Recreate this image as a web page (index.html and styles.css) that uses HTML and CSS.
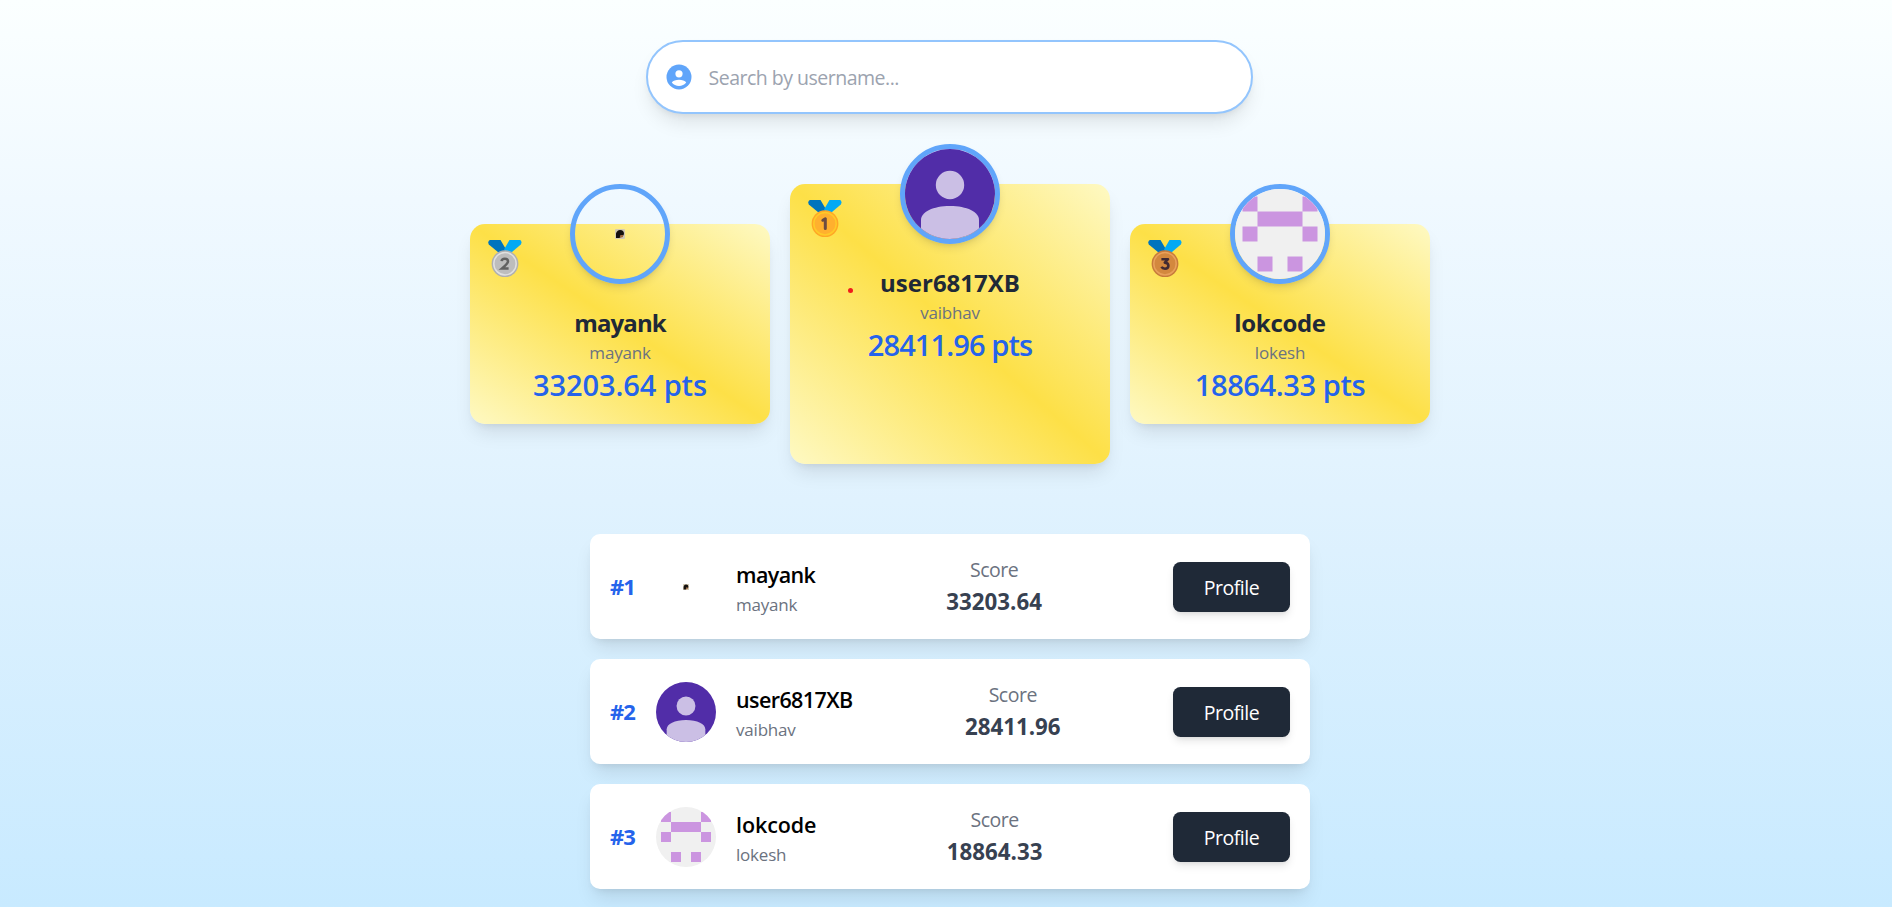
FILE: index.html
```
<!DOCTYPE html>
<html lang="en">
<head>
<meta charset="utf-8">
<title>Leaderboard</title>
<link rel="stylesheet" href="styles.css">
</head>
<body>
<svg class="defs" width="0" height="0">
  <defs>
    <symbol id="person" viewBox="0 0 90 90">
      <rect width="90" height="90" fill="#512da8"/>
      <circle cx="45" cy="36" r="14.2" fill="#cbbfe5"/>
      <path d="M16 90V71C16 63 28 57 45 57S74 63 74 71V90Z" fill="#cbbfe5"/>
    </symbol>
    <symbol id="pixels" viewBox="0 0 60 60">
      <rect width="60" height="60" fill="#f0f0f0"/>
      <path fill="#cb95e0" d="M5 5h10v10H5zM45 5h10v10H45zM15 15h30v10H15zM5 25h10v10H5zM45 25h10v10H45zM15 45h10v10H15zM35 45h10v10H35z"/>
    </symbol>
    <symbol id="tiny" viewBox="0 0 10 10">
      <rect width="10" height="10" rx="1" fill="#d3cab4"/>
      <path d="M1 9V4.5Q2 1 5 1Q9 1 9 5L8 7L6 6L5 9Z" fill="#15100f"/>
      <path d="M4.5 9L5.5 6L8 6V8Z" fill="#a0683f"/>
    </symbol>
    <symbol id="ribbon" viewBox="0 0 34 38">
      <path d="M1.8 0H12.5L17.2 8V12L10.5 12.5L.8 4.6Q-.6 1.4 1.8 0Z" fill="#0074bd"/>
      <path d="M32.2 0H21.5L16 9.5L19 12.5L24 12L32.8 4.6Q34.4 1.4 32.2 0Z" fill="#03a9f4"/>
    </symbol>
  </defs>
</svg>

<main class="page">
  <label class="search">
    <svg class="search-icon" viewBox="0 0 26 26"><circle cx="13" cy="13" r="12.5" fill="#60a5fa"/><circle cx="13" cy="9.8" r="3.6" fill="#fff"/><path d="M5.8 18.6C8 14.9 18 14.9 20.2 18.6C17 23.2 9 23.2 5.8 18.6Z" fill="#fff"/></svg>
    <input class="search-input" type="text" placeholder="Search by username...">
  </label>

  <section class="podium">
    <article class="card card-second">
      <svg class="medal" viewBox="0 0 34 38"><use href="#ribbon"/><circle cx="17" cy="23.7" r="13.4" fill="#b0b0b0"/><circle cx="17" cy="23.7" r="11.2" fill="#bdbdbd" stroke="#e0e0e0" stroke-width="1.5"/><path d="M13.6 21.2Q13.8 18.8 16.8 18.8Q20 18.8 20 21.4Q20 23.2 13.8 28.6H20.6" fill="none" stroke="#616161" stroke-width="2.5"/></svg>
      <div class="portrait"><svg class="thumb" viewBox="0 0 10 10"><use href="#tiny"/></svg></div>
      <h2 class="card-name">mayank</h2>
      <p class="card-user">mayank</p>
      <p class="card-points">33203.64 pts</p>
    </article>
    <article class="card card-first">
      <svg class="medal" viewBox="0 0 34 38"><use href="#ribbon"/><circle cx="17" cy="23.7" r="13.4" fill="#ffa726"/><circle cx="17" cy="23.7" r="11.2" fill="#ffb02e" stroke="#ffca28" stroke-width="1.5"/><path d="M14.8 20.2L17.3 18.8V28.4" fill="none" stroke="#6d4c41" stroke-width="3" stroke-linejoin="round" stroke-linecap="round"/></svg>
      <div class="portrait"><svg class="fill" viewBox="0 0 90 90"><use href="#person"/></svg></div>
      <span class="marker"></span>
      <h2 class="card-name">user6817XB</h2>
      <p class="card-user">vaibhav</p>
      <p class="card-points">28411.96 pts</p>
    </article>
    <article class="card card-third">
      <svg class="medal" viewBox="0 0 34 38"><use href="#ribbon"/><circle cx="17" cy="23.7" r="13.4" fill="#c77b3b"/><circle cx="17" cy="23.7" r="11.2" fill="#d3883e" stroke="#e9a15b" stroke-width="1.5"/><path d="M13.4 19.2H20L16.8 22.6Q20.4 22.8 20.4 25.8Q20.2 28.7 17 28.7Q14.4 28.7 13.5 26.8" fill="none" stroke="#402a32" stroke-width="2.6" stroke-linejoin="round"/></svg>
      <div class="portrait"><svg class="fill" viewBox="0 0 60 60"><use href="#pixels"/></svg></div>
      <h2 class="card-name">lokcode</h2>
      <p class="card-user">lokesh</p>
      <p class="card-points">18864.33 pts</p>
    </article>
  </section>

  <section class="list">
    <div class="row">
      <div class="who">
        <span class="rank">#1</span>
        <div class="avatar"><svg class="thumb thumb-small" viewBox="0 0 10 10"><use href="#tiny"/></svg></div>
        <div class="names"><p class="row-name">mayank</p><p class="row-user">mayank</p></div>
      </div>
      <div class="score"><p class="score-label">Score</p><p class="score-value">33203.64</p></div>
      <button class="profile">Profile</button>
    </div>
    <div class="row">
      <div class="who">
        <span class="rank">#2</span>
        <div class="avatar"><svg class="fill" viewBox="0 0 90 90"><use href="#person"/></svg></div>
        <div class="names"><p class="row-name">user6817XB</p><p class="row-user">vaibhav</p></div>
      </div>
      <div class="score"><p class="score-label">Score</p><p class="score-value">28411.96</p></div>
      <button class="profile">Profile</button>
    </div>
    <div class="row">
      <div class="who">
        <span class="rank">#3</span>
        <div class="avatar"><svg class="fill" viewBox="0 0 60 60"><use href="#pixels"/></svg></div>
        <div class="names"><p class="row-name row-name-wide">lokcode</p><p class="row-user">lokesh</p></div>
      </div>
      <div class="score"><p class="score-label">Score</p><p class="score-value">18864.33</p></div>
      <button class="profile">Profile</button>
    </div>
  </section>
</main>
</body>
</html>
```
FILE: styles.css
```
* { box-sizing: border-box; margin: 0; padding: 0; }
html { height: 100%; overflow: hidden; }
body {
  height: 907px;
  overflow: hidden;
  font-family: "Open Sans", "Noto Sans", sans-serif;
  background: linear-gradient(#fbffff 0, #f0f9ff 200px, #e0f2fe 500px, #c8eaff 907px) no-repeat;
}
.defs { position: absolute; }
.page { padding-top: 40px; display: flex; flex-direction: column; align-items: center; }
.search {
  width: 607px; height: 74px; margin-left: 6px;
  display: flex; align-items: center; gap: 17px; padding: 0 18px;
  background: #fff; border: 2px solid #93c5fd; border-radius: 37px;
  box-shadow: 0 12px 19px -4px rgba(0,0,0,.1), 0 5px 8px -5px rgba(0,0,0,.1);
}
.search-icon { width: 26px; height: 26px; flex: none; }
.search-input { flex: 1; border: 0; outline: 0; font: inherit; font-size: 19.5px; letter-spacing: -.5px; background: none; padding-top: 1px; }
.search-input::placeholder { color: #9ca3af; opacity: 1; }

.podium { display: flex; align-items: center; gap: 20px; margin: 70px 0 0 8px; }
.card {
  position: relative; width: 300px; height: 200px; border-radius: 15px;
  padding-top: 81px; text-align: center;
  background: linear-gradient(to top right, #fef9c3, #fde047, #fef9c3);
  box-shadow: 0 12px 19px -4px rgba(0,0,0,.1), 0 5px 8px -5px rgba(0,0,0,.1);
}
.card-first { width: 320px; height: 280px; }
.medal { position: absolute; left: 18px; top: 16px; width: 34px; height: 38px; }
.portrait {
  position: absolute; top: -40px; left: 50%; width: 100px; height: 100px; margin-left: -50px;
  border: 5px solid #60a5fa; border-radius: 50%; overflow: hidden;
  display: flex; align-items: center; justify-content: center;
  box-shadow: 0 5px 8px -1px rgba(0,0,0,.1), 0 3px 5px -3px rgba(0,0,0,.1);
}
.fill { width: 100%; height: 100%; display: block; }
.thumb { width: 10px; height: 10px; }
.thumb-small { width: 6px; height: 6px; }
.marker { position: absolute; left: 57.5px; top: 103.5px; width: 5px; height: 5px; border-radius: 50%; background: #ef1c1c; }
.card-name { font-size: 24px; line-height: 35px; font-weight: 700; color: #1f2937; letter-spacing: -.3px; }
.card-user { font-size: 17px; line-height: 25px; color: #6b7280; letter-spacing: -.2px; }
.card-points { font-size: 29px; line-height: 39px; font-weight: 600; color: #2563eb; letter-spacing: -.1px; }
.card-second .card-name { letter-spacing: -.9px; }
.card-first .card-name { letter-spacing: 0; }
.card-first .card-points { letter-spacing: -.9px; }
.card-third .card-points { letter-spacing: -.4px; }

.list { width: 720px; margin: 70px 0 0 8px; display: flex; flex-direction: column; gap: 20px; }
.row {
  height: 105px; padding: 0 20px; display: flex; align-items: center; justify-content: space-between;
  background: #fff; border-radius: 10px;
  box-shadow: 0 12px 19px -4px rgba(0,0,0,.1), 0 5px 8px -5px rgba(0,0,0,.1);
}
.who { display: flex; align-items: center; gap: 20px; }
.rank { width: 26px; padding-bottom: 2px; font-size: 22px; font-weight: 700; color: #2563eb; letter-spacing: -.9px; }
.avatar { width: 60px; height: 60px; border-radius: 50%; overflow: hidden; display: flex; align-items: center; justify-content: center; }
.names { padding-top: 2px; }
.row-name { font-size: 21.5px; line-height: 35px; font-weight: 600; color: #000; letter-spacing: -.6px; }
.row-name-wide { letter-spacing: -.1px; }
.row-user { font-size: 17px; line-height: 26px; color: #6b7280; letter-spacing: -.2px; }
.score { text-align: center; }
.score-label { padding-top: 1px; font-size: 19.5px; line-height: 30px; color: #6b7280; letter-spacing: -.5px; }
.score-value { font-size: 22.3px; line-height: 34px; font-weight: 700; color: #374151; }
.profile {
  width: 117px; height: 50px; padding-top: 2px; border: 0; border-radius: 7.5px; background: #1f2937; color: #fff;
  font: 500 19.5px "Open Sans", "Noto Sans", sans-serif; letter-spacing: -.5px;
  box-shadow: 0 5px 8px -1px rgba(0,0,0,.1), 0 3px 5px -3px rgba(0,0,0,.1);
}
```
